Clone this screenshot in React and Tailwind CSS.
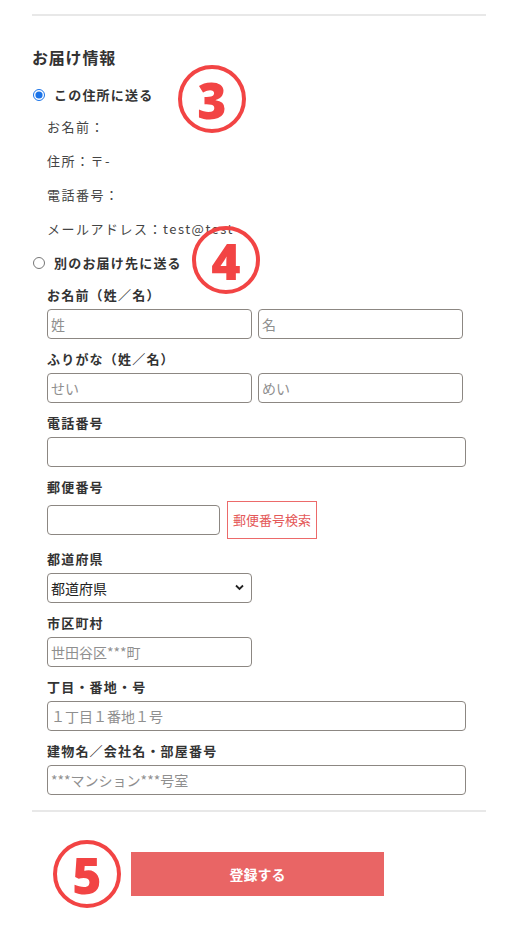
import { useState } from "react"

const font = { fontFamily: '"Noto Sans CJK JP", "Noto Sans", sans-serif' }

function Field({ label, children, top = "mt-[10px]" }) {
  return (
    <div className={top}>
      <div className="h-5 text-[13px] leading-5 font-bold tracking-[1.2px] text-[#333]">{label}</div>
      <div className="mt-[4px]">{children}</div>
    </div>
  )
}

function TextInput({ placeholder = "", className = "w-[205px]" }) {
  return (
    <input
      type="text"
      placeholder={placeholder}
      className={`h-[30px] rounded-[4px] border border-[#8c8782] bg-white px-[3px] text-[14px] text-[#333] placeholder:text-[#8f8f8f] outline-none ${className}`}
    />
  )
}

function Badge({ n, className }) {
  return (
    <div
      className={`absolute flex h-[68px] w-[68px] items-center justify-center rounded-full border-[4px] border-[#f24444] ${className}`}
    >
      <span
        className="mt-[1px] text-[50px] leading-none font-black text-[#f24444]"
        style={{ fontFamily: '"Noto Sans", sans-serif' }}
      >
        {n}
      </span>
    </div>
  )
}

export default function App() {
  const [mode, setMode] = useState("same")

  return (
    <div className="relative min-h-[948px] w-[507px] bg-white pt-[14px]" style={font}>
      <div className="mr-[21px] ml-8 h-[2px] bg-[#e8e8e8]" />

      <div className="px-8">
        <h2 className="mt-[30px] h-[22px] text-[16px] leading-[22px] font-bold tracking-[0.8px] text-[#333]">お届け情報</h2>

        <label className="mt-[17px] flex h-5 items-center gap-[9px]">
          <input
            type="radio"
            name="dest"
            checked={mode === "same"}
            onChange={() => setMode("same")}
            className="m-0 ml-[1px] h-[12px] w-[12px] accent-[#1a73e8]"
          />
          <span className="text-[13px] font-bold tracking-[1.2px] text-[#333]">この住所に送る</span>
        </label>

        <div className="mt-[5px] pl-[15px] text-[13px] tracking-[1.5px] text-[#444]">
          <div className="flex h-[34px] items-center">お名前：</div>
          <div className="flex h-[34px] items-center">住所：〒-</div>
          <div className="flex h-[34px] items-center">電話番号：</div>
          <div className="flex h-[34px] items-center">メールアドレス：test@test</div>
        </div>

        <label className="mt-[7px] flex h-5 items-center gap-[9px]">
          <input
            type="radio"
            name="dest"
            checked={mode === "other"}
            onChange={() => setMode("other")}
            className="m-0 ml-[1px] h-[12px] w-[12px] accent-[#1a73e8]"
          />
          <span className="text-[13px] font-bold tracking-[1.2px] text-[#333]">別のお届け先に送る</span>
        </label>

        <div className="pl-[15px]">
          <Field label="お名前（姓／名）" top="mt-[12px]">
            <div className="flex gap-[6px]">
              <TextInput placeholder="姓" />
              <TextInput placeholder="名" />
            </div>
          </Field>

          <Field label="ふりがな（姓／名）">
            <div className="flex gap-[6px]">
              <TextInput placeholder="せい" />
              <TextInput placeholder="めい" />
            </div>
          </Field>

          <Field label="電話番号">
            <TextInput className="w-[419px]" />
          </Field>

          <Field label="郵便番号">
            <div className="flex h-[38px] items-center gap-[7px]">
              <TextInput className="w-[173px]" />
              <button className="h-[38px] w-[90px] border border-[#ec6a6a] bg-white text-[13px] text-[#e45858]">
                郵便番号検索
              </button>
            </div>
          </Field>

          <Field label="都道府県">
            <div className="relative w-[205px]">
              <select className="h-[30px] w-full appearance-none rounded-[4px] border border-[#8c8782] bg-white px-[3px] text-[14px] text-[#222] outline-none">
                <option>都道府県</option>
              </select>
              <svg className="pointer-events-none absolute top-[11px] right-[8px]" width="9" height="7" viewBox="0 0 9 7">
                <path d="M1 1.5 L4.5 5 L8 1.5" fill="none" stroke="#222" strokeWidth="1.8" />
              </svg>
            </div>
          </Field>

          <Field label="市区町村">
            <TextInput placeholder="世田谷区***町" />
          </Field>

          <Field label="丁目・番地・号">
            <TextInput placeholder="１丁目１番地１号" className="w-[419px]" />
          </Field>

          <Field label="建物名／会社名・部屋番号">
            <TextInput placeholder="***マンション***号室" className="w-[419px]" />
          </Field>
        </div>
      </div>

      <div className="mt-[15px] mr-[21px] ml-8 h-[2px] bg-[#e8e8e8]" />

      <div className="mt-[40px] pl-[131px]">
        <button className="h-[44px] w-[253px] bg-[#e96565] text-[14px] font-bold text-white">登録する</button>
      </div>

      <Badge n="3" className="top-[65px] left-[178px]" />
      <Badge n="4" className="top-[226px] left-[192px]" />
      <Badge n="5" className="top-[840px] left-[53px]" />
    </div>
  )
}
